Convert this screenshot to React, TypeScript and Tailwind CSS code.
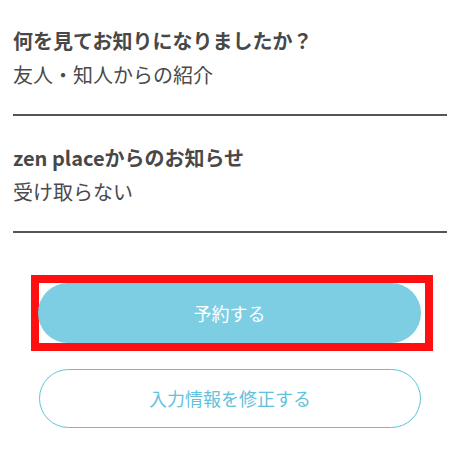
const FONT = "font-['Hiragino_Sans','Noto_Sans_CJK_JP',sans-serif]";

interface FieldProps {
  label: string;
  value: string;
}

function Field({ label, value }: FieldProps) {
  return (
    <div className="border-b-2 border-[#555555] pb-[25px]">
      <div className="text-[20px] font-bold leading-[28px] text-[#484848]">{label}</div>
      <div className="mt-[6px] text-[20px] leading-[28px] text-[#4a4a4a]">{value}</div>
    </div>
  );
}

export default function App() {
  return (
    <div className={`${FONT} h-[462px] w-[468px] bg-white px-[13px] pt-[27px]`}>
      <div className="w-[434px]">
        <Field label="何を見てお知りになりましたか？" value="友人・知人からの紹介" />
        <div className="mt-[28px]">
          <Field label="zen placeからのお知らせ" value="受け取らない" />
        </div>
      </div>

      <div className="mt-[42px] ml-[18px] w-[402px] border-[8px] border-[#ff1010] pr-[3px]">
        <button className="-ml-px flex h-[60px] w-[383px] items-center justify-center rounded-full bg-[#7ecee3] text-[18px] text-white">
          予約する
        </button>
      </div>

      <button className="mt-[18px] ml-[26px] flex h-[59px] w-[382px] items-center justify-center rounded-full border border-[#5bc4dd] bg-white text-[18px] text-[#62c2dc]">
        入力情報を修正する
      </button>
    </div>
  );
}
